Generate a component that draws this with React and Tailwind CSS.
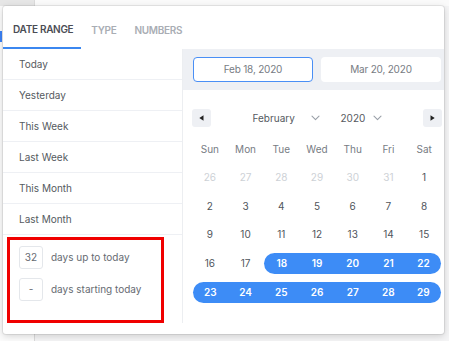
import React from "react";

const ChevronDown = () => (
  <svg width="9" height="6" viewBox="0 0 9 6" fill="none">
    <path d="M1 1.2L4.5 4.6L8 1.2" stroke="#9aa0a8" strokeWidth="1.1" strokeLinecap="round" strokeLinejoin="round" />
  </svg>
);

const Tri = ({ dir }) => (
  <svg width="5" height="6" viewBox="0 0 5 6">
    {dir === "left" ? <path d="M4.5 0.2V5.8L0.3 3Z" fill="#222" /> : <path d="M0.5 0.2V5.8L4.7 3Z" fill="#222" />}
  </svg>
);

const rows = [
  [
    { d: 26, m: true },
    { d: 27, m: true },
    { d: 28, m: true },
    { d: 29, m: true },
    { d: 30, m: true },
    { d: 31, m: true },
    { d: 1 },
  ],
  [2, 3, 4, 5, 6, 7, 8].map((d) => ({ d })),
  [9, 10, 11, 12, 13, 14, 15].map((d) => ({ d })),
  [16, 17, 18, 19, 20, 21, 22].map((d) => ({ d, s: d >= 18 })),
  [23, 24, 25, 26, 27, 28, 29].map((d) => ({ d, s: true })),
];

export default function App() {
  const presets = ["Today", "Yesterday", "This Week", "Last Week", "This Month", "Last Month"];
  return (
    <div className="relative w-[449px] h-[341px] overflow-hidden bg-[#f4f4f5] font-['Inter',sans-serif]">
      {/* background page */}
      <div className="absolute inset-y-0 left-0 w-[35px] bg-[#fbfbfb] border-r border-[#dadada] flex flex-col">
        <div className="h-[6px] bg-[#e6e6e6]" />
        <div className="mt-[25px] h-[11px] w-[2px] bg-[#3b82f6]" />
      </div>
      <div className="absolute top-0 left-[35px] right-0 h-[6px] bg-[#fafafa]" />

      {/* popup */}
      <div className="absolute left-[3px] top-[6px] w-[441px] h-[328px] bg-white rounded-[3px] shadow-[0_0_0_1px_rgba(0,0,0,0.07),0_2px_7px_rgba(0,0,0,0.16)] flex flex-col overflow-hidden">
        {/* tabs */}
        <div className="h-[43px] flex shrink-0">
          <div className="pl-[10px] pr-[8px] pt-[5px] flex items-center border-b-2 border-[#3b87f0] text-[10px] tracking-[-0.3px] font-semibold text-[#4b4d55] uppercase">
            Date Range
          </div>
          <div className="pl-[10px] pr-[9px] pt-[5px] flex items-center text-[10px] tracking-[-0.3px] font-semibold text-[#a9adb4] uppercase">
            Type
          </div>
          <div className="px-[9px] pt-[5px] flex items-center text-[10px] tracking-[-0.3px] font-semibold text-[#a9adb4] uppercase">
            Numbers
          </div>
        </div>

        {/* body */}
        <div className="flex flex-1 pb-[11px]">
          {/* left column */}
          <div className="w-[180px] shrink-0 border-r border-[#eceef1] flex flex-col">
            {presets.map((p) => (
              <div
                key={p}
                className="h-[31px] border-b border-[#eef0f4] pl-[16px] flex items-center text-[10px] text-[#555a60]"
              >
                {p}
              </div>
            ))}
            <div className="mt-[2px] ml-[4px] w-[157px] h-[86px] border-[3px] border-[#f00000] pl-[9px] pt-[6px] flex flex-col gap-[9px]">
              <div className="flex items-center gap-[8px]">
                <div className="w-[24px] h-[23px] border border-[#e4e7eb] rounded-[3px] flex items-center justify-center text-[10px] text-[#666b72]">
                  32
                </div>
                <span className="text-[10px] text-[#666b72]">days up to today</span>
              </div>
              <div className="flex items-center gap-[8px]">
                <div className="w-[24px] h-[23px] border border-[#e4e7eb] rounded-[3px] flex items-center justify-center text-[10px] text-[#666b72]">
                  -
                </div>
                <span className="text-[10px] text-[#666b72]">days starting today</span>
              </div>
            </div>
          </div>

          {/* right column */}
          <div className="flex-1 flex flex-col">
            <div className="h-[41px] bg-[#eef0f4] flex items-center pl-[10px] pr-[2px] gap-[8px]">
              <div className="w-[120px] h-[25px] rounded-[4px] bg-white border-[1.5px] border-[#4a8ff5] flex items-center justify-center text-[10px] tracking-[-0.2px] text-[#777c83]">
                Feb 18, 2020
              </div>
              <div className="w-[120px] h-[25px] rounded-[4px] bg-white flex items-center justify-center text-[10px] tracking-[-0.2px] text-[#777c83]">
                Mar 20, 2020
              </div>
            </div>

            <div className="pl-[9px] pr-[2px] mt-[19px] flex flex-col">
              {/* nav */}
              <div className="h-[18px] flex items-center justify-between">
                <div className="w-[19px] h-[18px] rounded-[3px] bg-[#eef0f4] flex items-center justify-center">
                  <Tri dir="left" />
                </div>
                <div className="flex items-center gap-[21px] text-[10px] text-[#555a60]">
                  <div className="w-[67px] flex items-center justify-between">
                    <span>February</span>
                    <ChevronDown />
                  </div>
                  <div className="w-[41px] flex items-center justify-between">
                    <span>2020</span>
                    <ChevronDown />
                  </div>
                </div>
                <div className="w-[19px] h-[18px] rounded-[3px] bg-[#eef0f4] flex items-center justify-center">
                  <Tri dir="right" />
                </div>
              </div>

              {/* grid */}
              <div className="w-[250px] mt-[9px]">
                <div className="grid grid-cols-7 h-[27px] items-center text-[10px] text-[#777c83]">
                  {["Sun", "Mon", "Tue", "Wed", "Thu", "Fri", "Sat"].map((d) => (
                    <div key={d} className="text-center">{d}</div>
                  ))}
                </div>
                {rows.map((r, ri) => (
                  <div key={ri} className="grid grid-cols-7 h-[28.75px] items-center text-[10px]">
                    {r.map((c, ci) => {
                      if (c.s) {
                        const first = ci === 0 || !r[ci - 1].s;
                        const last = ci === 6;
                        return (
                          <div
                            key={ci}
                            className={
                              "h-[21px] bg-[#3d8cf6] flex items-center justify-center text-white font-semibold " +
                              (first ? "rounded-l-full ml-[1px] " : "") +
                              (last ? "rounded-r-full mr-[1.5px]" : "")
                            }
                          >
                            {c.d}
                          </div>
                        );
                      }
                      return (
                        <div
                          key={ci}
                          className={"text-center " + (c.m ? "text-[#cdd1d6]" : "text-[#50555b]")}
                        >
                          {c.d}
                        </div>
                      );
                    })}
                  </div>
                ))}
              </div>
            </div>
          </div>
        </div>
      </div>
    </div>
  );
}
